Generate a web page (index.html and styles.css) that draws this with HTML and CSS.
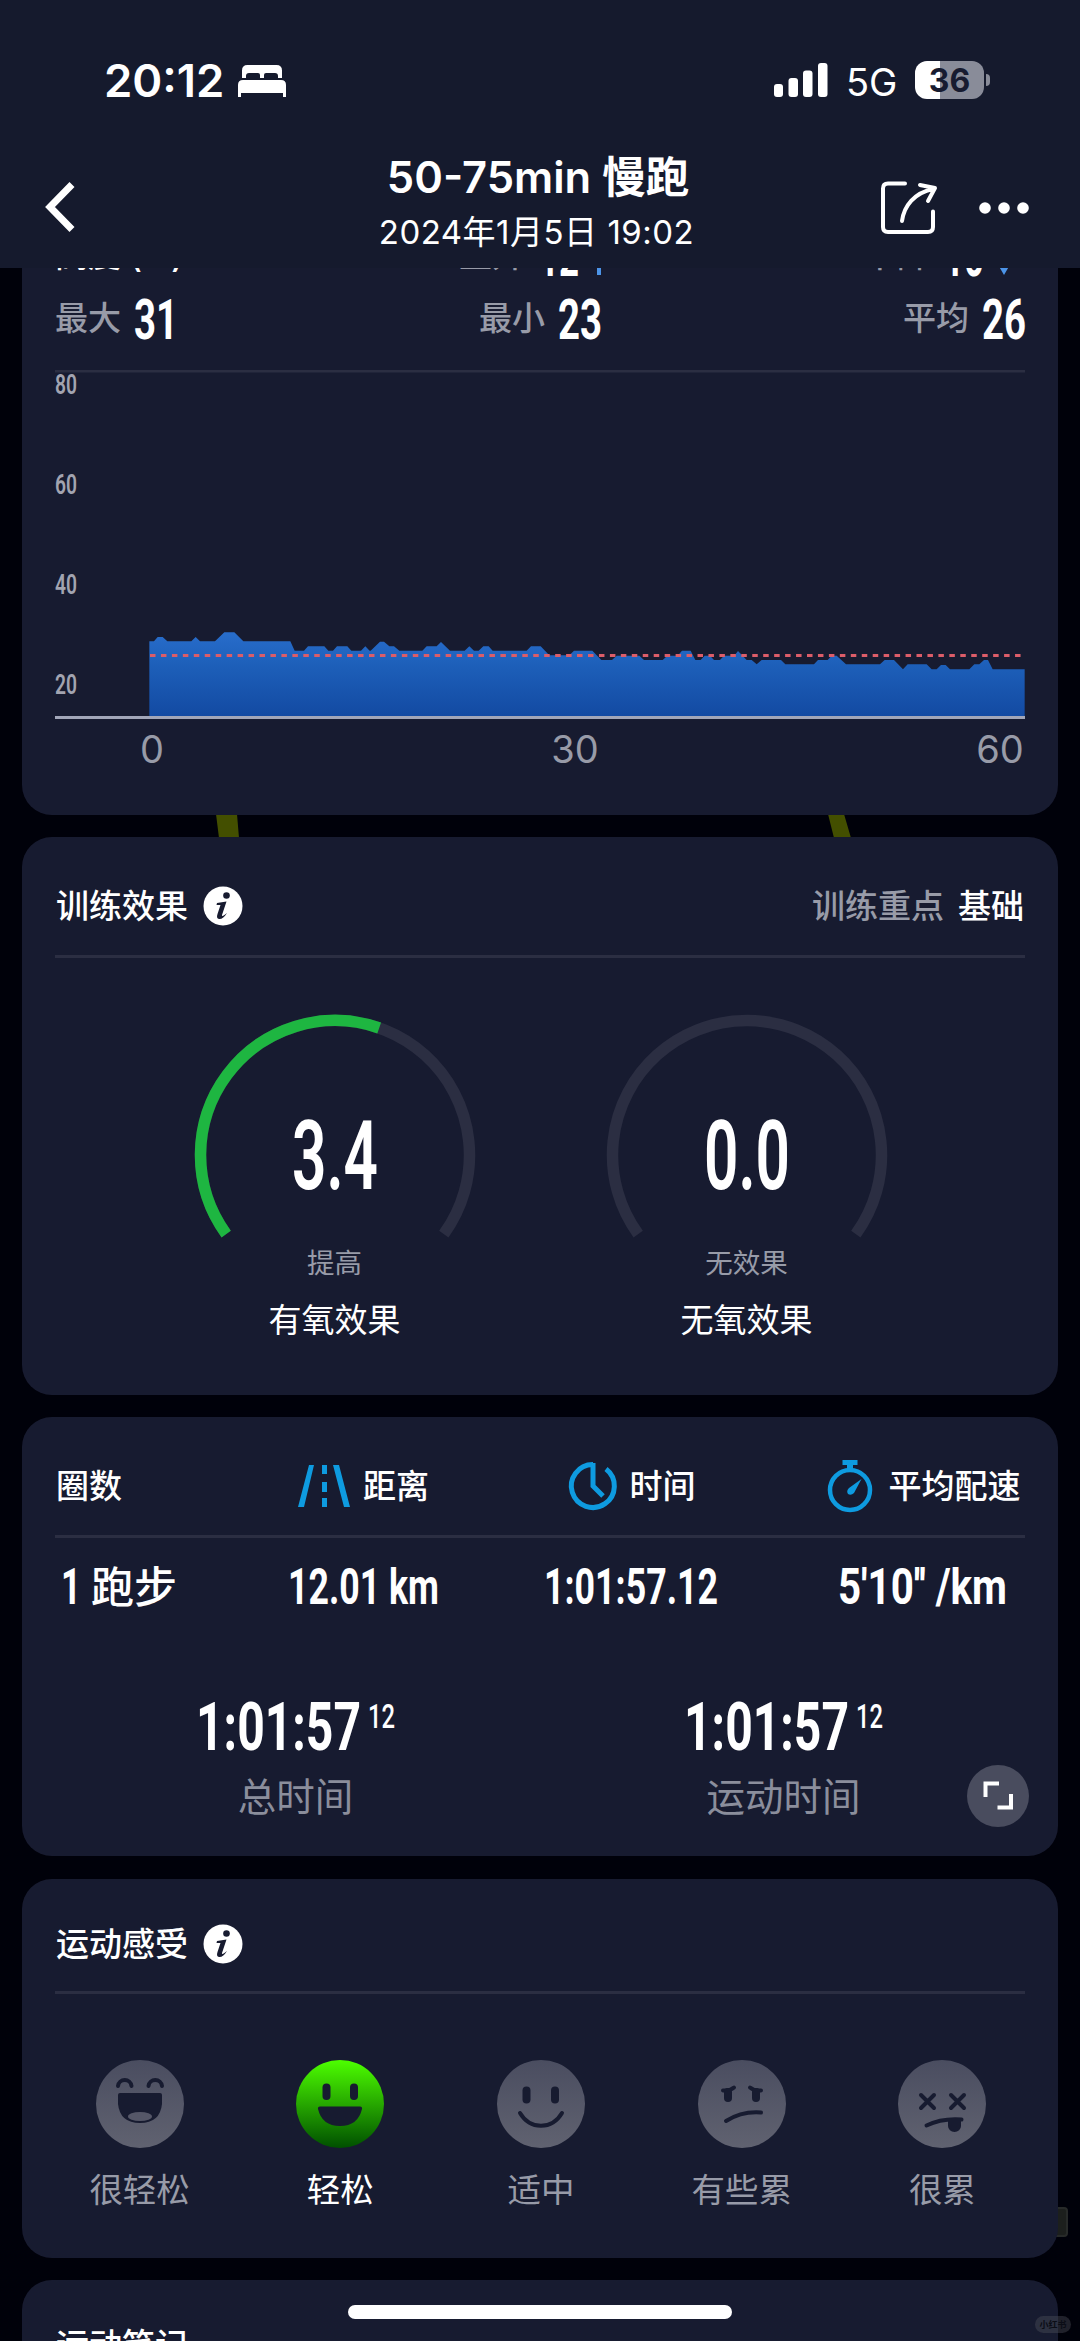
FILE: index.html
```html
<!DOCTYPE html>
<html lang="zh-CN">
<head>
<meta charset="utf-8">
<title>50-75min 慢跑</title>
<link rel="stylesheet" href="styles.css">
</head>
<body>
<div class="app">
  <header class="header">
    <div class="status">
      <div class="status-left">
        <span class="clock">20:12</span>
        <svg class="bed" width="48" height="34" viewBox="0 0 48 34" fill="#fff"><path d="M4 14V6.500Q4 1 9.500 1H38.500Q44 1 44 6.500V14H40V12Q40 9 37 9H28Q26 9 26 11V14H22V11Q22 9 20 9H11Q8 9 8 12V14Z"/><path d="M0 33V21Q0 16 5 16H43Q48 16 48 21V33H45V29H3V33Z"/></svg>
      </div>
      <div class="status-right">
        <svg width="54" height="34" viewBox="0 0 54 34" fill="#fff"><rect y="21" width="9" height="13" rx="3"/><rect x="14.500" y="15" width="9.500" height="19" rx="3"/><rect x="29" y="7.500" width="9.500" height="26.500" rx="3"/><rect x="44" width="9.500" height="34" rx="3"/></svg>
        <span class="network">5G</span>
        <div class="battery"><span>36</span></div>
        <i class="battery-nub"></i>
      </div>
    </div>
    <div class="nav">
      <svg class="back" width="32" height="52" viewBox="0 0 32 52" fill="none" stroke="#fff" stroke-width="7"><path d="M28 3.500L6 26L28 48.500"/></svg>
      <div class="heading">
        <h1>50-75min 慢跑</h1>
        <p>2024年1月5日 19:02</p>
      </div>
      <div class="actions">
        <svg width="58" height="56" viewBox="0 0 58 56" fill="none" stroke="#fff" stroke-width="4" stroke-linecap="round" stroke-linejoin="round"><path d="M25 3.500H8Q3 3.500 3 8.500V47Q3 52 8 52H48Q53 52 53 47V31.500"/><path d="M22 41C24 26 34 13 53 9M40 5L55 8L48 21"/></svg>
        <svg width="50" height="12" viewBox="0 0 50 12" fill="#fff"><circle cx="6" cy="6" r="5.800"/><circle cx="25" cy="6" r="5.800"/><circle cx="44" cy="6" r="5.800"/></svg>
      </div>
    </div>
  </header>

  <main class="content">
    <svg class="track" width="1080" height="24" viewBox="0 0 1080 24" fill="#434f00"><path d="M216 0H237L239 24H219ZM828 0H844L851 24H834Z"/></svg>
    <i class="map-tag"></i>

    <section class="card altitude">
      <div class="stat-row summary">
        <div class="stat title"><span>高度 (m)</span></div>
        <div class="stat"><span class="label">上升</span><svg class="num" width="38" height="40"><text x="-1" y="40" font-size="56" textLength="40" lengthAdjust="spacingAndGlyphs">12</text></svg><svg class="arrow" width="14" height="38" viewBox="0 0 14 38" fill="#4c94e8"><path d="M7 0L14 12H9V38H5V12H0Z"/></svg></div>
        <div class="stat"><span class="label">下降</span><svg class="num" width="38" height="40"><text x="-1" y="40" font-size="56" textLength="40" lengthAdjust="spacingAndGlyphs">10</text></svg><svg class="arrow" width="14" height="38" viewBox="0 0 14 38" fill="#4c94e8"><path d="M7 38L14 26H9V0H5V26H0Z"/></svg></div>
      </div>
      <div class="stat-row">
        <div class="stat"><span class="label">最大</span><svg class="num" width="41" height="39"><text x="-2" y="39" font-size="55" textLength="44" lengthAdjust="spacingAndGlyphs">31</text></svg></div>
        <div class="stat"><span class="label">最小</span><svg class="num" width="41" height="39"><text x="-2" y="39" font-size="55" textLength="44" lengthAdjust="spacingAndGlyphs">23</text></svg></div>
        <div class="stat"><span class="label">平均</span><svg class="num" width="41" height="39"><text x="-2" y="39" font-size="55" textLength="44" lengthAdjust="spacingAndGlyphs">26</text></svg></div>
      </div>
      <svg class="chart" width="970" height="400" viewBox="55 370 970 400">
        <defs><linearGradient id="area" x1="0" y1="97" x2="0" y2="348" gradientUnits="userSpaceOnUse"><stop offset="0" stop-color="#286dcb"/><stop offset=".4" stop-color="#1d5fb9"/><stop offset="1" stop-color="#134aa2"/></linearGradient></defs>
        <rect x="55" y="370" width="970" height="2.500" fill="#2b2e42"/>
        <g class="y-axis">
          <text x="55" y="394" textLength="22" lengthAdjust="spacingAndGlyphs">80</text>
          <text x="55" y="494" textLength="22" lengthAdjust="spacingAndGlyphs">60</text>
          <text x="55" y="594" textLength="22" lengthAdjust="spacingAndGlyphs">40</text>
          <text x="55" y="693.500" textLength="22" lengthAdjust="spacingAndGlyphs">20</text>
        </g>
        <g transform="translate(130 600) scale(.33333)">
          <polygon fill="url(#area)" points="58,350 58,124 72,124 83,111 98,111 112,124 184,124 197,111 210,124 255,124 283,97 313,97 340,124 481,124 494,152 522,152 534,139 583,139 595,152 609,152 621,139 652,139 664,152 693,152 706,139 719,152 722,152 750,125 762,125 778,139 792,139 808,152 877,152 890,139 920,139 933,126 960,152 1004,152 1018,139 1032,152 1046,152 1060,139 1076,139 1088,152 1190,152 1203,139 1232,139 1258,166 1318,166 1332,152 1387,152 1414,180 1446,180 1460,167 1528,167 1542,180 1598,180 1612,167 1643,167 1656,152 1682,152 1696,180 1712,180 1724,167 1740,167 1752,180 1770,180 1782,167 1813,167 1824,153 1850,180 1865,180 1880,193 1895,180 1953,180 1966,193 2052,193 2064,180 2093,180 2105,167 2120,167 2148,193 2250,193 2264,180 2292,180 2319,208 2333,193 2390,193 2405,208 2420,208 2433,195 2447,195 2460,208 2518,208 2533,193 2548,193 2562,180 2574,180 2588,208 2684,208 2684,350"/>
        </g>
        <path d="M150 655.500H1025" stroke="#dc5d69" stroke-width="3" stroke-dasharray="5.500 5.450"/>
        <rect x="55" y="716" width="970" height="3" fill="#a2a6b8"/>
        <g class="x-axis"><text x="152" y="763">0</text><text x="575" y="763">30</text><text x="1000" y="763">60</text></g>
      </svg>
    </section>

    <section class="card training">
      <div class="card-head">
        <h2>训练效果</h2>
        <svg class="info" width="40" height="40" viewBox="0 0 40 40"><circle cx="20" cy="20" r="19.500" fill="#fff"/><circle cx="23.500" cy="9.500" r="3.300" fill="#171b30"/><path d="M14 17L23.500 15.500L19 29Q18.500 31.500 24 27Q20 33.500 16 33Q13 32.500 14.500 28L17.500 19L13.500 19Z" fill="#171b30"/></svg>
        <div class="focus"><span>训练重点</span><b>基础</b></div>
      </div>
      <div class="gauges">
        <div class="gauge">
          <svg width="282" height="232" viewBox="-141 -141 282 232"><g fill="none" stroke-width="11.500"><path d="M-108.800 79.100A134.500 134.500 0 1 1 108.800 79.100" stroke="#2b2e42"/><path d="M-108.800 79.100A134.500 134.500 0 0 1 44.200 -127" stroke="#1eb641"/></g><text class="value" x="-43" y="33.500" textLength="86" lengthAdjust="spacingAndGlyphs">3.4</text></svg>
          <span class="level">提高</span><span class="name">有氧效果</span>
        </div>
        <div class="gauge">
          <svg width="282" height="232" viewBox="-141 -141 282 232"><path d="M-108.800 79.100A134.500 134.500 0 1 1 108.800 79.100" fill="none" stroke-width="11.500" stroke="#2b2e42"/><text class="value" x="-43" y="33.500" textLength="86" lengthAdjust="spacingAndGlyphs">0.0</text></svg>
          <span class="level">无效果</span><span class="name">无氧效果</span>
        </div>
      </div>
    </section>

    <section class="card laps">
      <div class="lap-grid lap-head">
        <div class="first">圈数</div>
        <div><svg width="52" height="42" viewBox="0 0 52 42" fill="#0e9be0"><path d="M11 0H16L6 42H0ZM35 0H41L52 42H46ZM24 0H29V9H24ZM24 17H29V27H24ZM24 33H29V42H24Z"/></svg>距离</div>
        <div><svg width="48" height="48" viewBox="0 0 48 48" fill="none" stroke="#0e9be0" stroke-width="5"><path d="M24 2.500A21.500 21.500 0 1 0 37 7"/><path d="M24 1V24L34 34"/></svg>时间</div>
        <div class="last"><svg width="46" height="54" viewBox="0 0 46 54"><circle cx="23" cy="31" r="20" fill="none" stroke="#0e9be0" stroke-width="4.500"/><path d="M15.500 1H30.500V6H26V12H20V6H15.500ZM34.500 20L27 34Q24 37 21 35Q19 32 22 29Z" fill="#0e9be0"/></svg>平均配速</div>
      </div>
      <div class="lap-grid lap-row">
        <div class="first"><svg class="num" width="17" height="36"><text x="-2" y="36" font-size="50" textLength="20" lengthAdjust="spacingAndGlyphs">1</text></svg><span>跑步</span></div>
        <div><svg class="num" width="146" height="36"><text x="-3" y="36" font-size="50" textLength="151" lengthAdjust="spacingAndGlyphs">12.01 km</text></svg></div>
        <div><svg class="num" width="170" height="36"><text x="-3" y="36" font-size="50" textLength="174" lengthAdjust="spacingAndGlyphs">1:01:57.12</text></svg></div>
        <div class="last"><svg class="num" width="168" height="36"><text x="-2" y="36" font-size="50" textLength="169" lengthAdjust="spacingAndGlyphs">5'10'' /km</text></svg></div>
      </div>
      <div class="totals">
        <div class="total"><svg class="num" width="196" height="48"><text x="-4" y="48" font-size="67" textLength="165" lengthAdjust="spacingAndGlyphs">1:01:57</text><text class="hundredths" x="168" y="26" font-size="34" textLength="27" lengthAdjust="spacingAndGlyphs">12</text></svg><span>总时间</span></div>
        <div class="total"><svg class="num" width="196" height="48"><text x="-4" y="48" font-size="67" textLength="165" lengthAdjust="spacingAndGlyphs">1:01:57</text><text class="hundredths" x="168" y="26" font-size="34" textLength="27" lengthAdjust="spacingAndGlyphs">12</text></svg><span>运动时间</span></div>
      </div>
      <div class="expand"><svg width="30" height="30" viewBox="0 0 30 30" fill="none" stroke="#fff" stroke-width="4"><path d="M2.500 16V2.500H16M28 13V26.500H14.500"/></svg></div>
    </section>

    <section class="card feeling">
      <div class="card-head">
        <h2>运动感受</h2>
        <svg class="info" width="40" height="40" viewBox="0 0 40 40"><circle cx="20" cy="20" r="19.500" fill="#fff"/><circle cx="23.500" cy="9.500" r="3.300" fill="#171b30"/><path d="M14 17L23.500 15.500L19 29Q18.500 31.500 24 27Q20 33.500 16 33Q13 32.500 14.500 28L17.500 19L13.500 19Z" fill="#171b30"/></svg>
      </div>
      <div class="moods">
        <svg width="0" height="0" class="defs"><defs><linearGradient id="grey" x1="0" y1="0" x2="0" y2="1"><stop offset="0" stop-color="#4a4d60"/><stop offset="1" stop-color="#606270"/></linearGradient><linearGradient id="green" x1="0" y1="0" x2="0" y2="1"><stop offset="0" stop-color="#4dff00"/><stop offset="1" stop-color="#005000"/></linearGradient></defs></svg>
        <div class="mood"><svg width="88" height="88" viewBox="-44 -44 88 88"><circle r="44" fill="url(#grey)"/><path d="M-22 -18A6.800 6.800 0 0 1 -8.500 -18M8.500 -18A6.800 6.800 0 0 1 22 -18" class="line"/><path class="ink" d="M-20 -11H20Q22 -11 22 -9V0Q20 19 0 19Q-20 19 -22 0V-9Q-22 -11 -20 -11Z"/><ellipse cy="12.500" rx="12" ry="4.500" fill="#555768"/></svg><span>很轻松</span></div>
        <div class="mood active"><svg width="88" height="88" viewBox="-44 -44 88 88"><circle r="44" fill="url(#green)"/><rect class="ink" x="-17.500" y="-20.500" width="8" height="16.500" rx="4"/><rect class="ink" x="10" y="-20.500" width="8" height="16.500" rx="4"/><path class="ink" d="M-20 2.500H20Q22.500 2.500 22 5Q18 22 0 22Q-18 22 -22 5Q-22.500 2.500 -20 2.500Z"/></svg><span>轻松</span></div>
        <div class="mood"><svg width="88" height="88" viewBox="-44 -44 88 88"><circle r="44" fill="url(#grey)"/><rect class="ink" x="-18.500" y="-17.500" width="8" height="17" rx="4"/><rect class="ink" x="10" y="-17.500" width="8" height="17" rx="4"/><path class="line" d="M-21 9C-11 26 11 26 21 9"/></svg><span>适中</span></div>
        <div class="mood"><svg width="88" height="88" viewBox="-44 -44 88 88"><circle r="44" fill="url(#grey)"/><path class="line" d="M-19 -13.500Q-12 -13 -8 -16.500M19 -13.500Q12 -13 8 -16.500M-16 17Q0 7 19 8.500"/><rect class="ink" x="-18" y="-16" width="8" height="14" rx="4"/><rect class="ink" x="10" y="-16" width="8" height="14" rx="4"/></svg><span>有些累</span></div>
        <div class="mood"><svg width="88" height="88" viewBox="-44 -44 88 88"><circle r="44" fill="url(#grey)"/><path class="line" d="M-21 -9L-8 4M-8 -9L-21 4M9 -9L22 4M22 -9L9 4M-15.500 21.500Q0 14 19.500 15.500"/><path class="ink" d="M6 16H19V22A6.500 6 0 0 1 6 22Z"/></svg><span>很累</span></div>
      </div>
    </section>

    <section class="card notes"><div class="card-head"><h2>运动笔记</h2></div></section>
  </main>
  <div class="home-bar"></div>
  <div class="watermark">小红书</div>
</div>
</body>
</html>
```
FILE: styles.css
```css
* { box-sizing: border-box; margin: 0; padding: 0; }
body { background: #00010a; }
svg { display: block; flex: none; overflow: visible; }

.app {
  position: relative;
  width: 1080px;
  height: 2341px;
  overflow: hidden;
  background: #00010a;
  color: #fff;
  font-family: Inter, "Noto Sans CJK SC", sans-serif;
}

.header {
  position: relative;
  z-index: 2;
  height: 268px;
  padding-top: 53px;
  background: #151a2d;
}
.status {
  display: flex;
  justify-content: space-between;
  height: 56px;
  padding: 0 90px 0 104px;
}
.status-left, .status-right { display: flex; align-items: center; }
.clock { font-size: 45.500px; font-weight: 600; line-height: 56px; width: 134px; }
.status-right { padding-bottom: 2px; }
.network { margin-left: 18px; width: 69px; font-size: 38px; line-height: 60px; padding-top: 4px; }
.battery {
  display: flex;
  align-items: center;
  justify-content: center;
  width: 69px;
  height: 38px;
  border-radius: 12px;
  background: linear-gradient(to right, #fff 25px, #898c99 25px);
  color: #171b30;
  font-size: 32px;
  font-weight: 700;
}
.battery-nub { width: 4px; height: 12px; margin-left: 2px; border-radius: 0 6px 6px 0; background: #898c99; }

.nav {
  display: grid;
  grid-template-columns: 200px 1fr 200px;
  align-items: start;
  padding: 41px 51px 0 44px;
}
.back { margin-top: 31px; }
.heading { text-align: center; }
.heading h1 { font-size: 43.500px; font-weight: 600; line-height: 54px; padding-left: 3px; }
.heading p { margin-top: 5px; font-size: 33px; font-weight: 400; letter-spacing: .5px; line-height: 46px; }
.actions { display: flex; align-items: center; justify-content: flex-end; gap: 41px; padding-top: 30px; }

.content { position: relative; height: 2073px; }
.track { position: absolute; left: 0; top: 546px; }
.map-tag {
  position: absolute;
  left: 1050px;
  top: 1939px;
  width: 18px;
  height: 30px;
  border: 2px solid #272a29;
  border-radius: 4px;
  background: #1c1f1d;
}
.card {
  position: relative;
  width: 1036px;
  margin: 0 auto 22px;
  padding: 0 33px;
  border-radius: 30px;
  background: #171b30;
}

.num { fill: #fff; font-family: Roboto, sans-serif; font-weight: 700; }

.altitude { top: -48px; height: 595px; margin-bottom: -26px; }
.stat-row { display: flex; justify-content: space-between; height: 54px; }
.stat { display: flex; align-items: center; font-size: 33px; font-weight: 500; line-height: 40px; }
.stat span { padding-bottom: 3px; }
.label { width: 81px; color: #989ba8; }
.summary { display: grid; grid-template-columns: 404px 1fr auto; height: 72px; padding-right: 14px; }
.summary .arrow { margin-left: 14px; }
.chart { margin-top: 24px; font-family: Inter, sans-serif; }
.y-axis { fill: #a2a4b0; font: 600 28px Roboto, sans-serif; }
.x-axis { fill: #989ba8; font-size: 38px; text-anchor: middle; }

.card-head {
  display: flex;
  align-items: center;
  padding: 0 1px;
  border-bottom: 3px solid #2b2e42;
}
.card-head h2 { font-size: 33px; font-weight: 500; line-height: 40px; }
.info { margin-left: 15px; }
.focus { display: flex; gap: 14px; margin-left: auto; font-size: 33px; line-height: 40px; }
.focus span { color: #989ba8; font-weight: 500; }
.focus b { font-weight: 500; }

.training { height: 558px; }
.training .card-head { height: 121px; padding-top: 19px; }
.gauges { display: grid; grid-template-columns: 412px 412px; justify-content: center; padding: 56px 0 0 1px; }
.gauge { display: flex; flex-direction: column; align-items: center; }
.gauge .value { fill: #fff; font: 600 96px Roboto, sans-serif; }
.level { margin-top: -1px; font-size: 27.500px; line-height: 36px; font-weight: 400; color: #989ba8; }
.name { margin-top: 19px; font-size: 33px; line-height: 40px; font-weight: 400; }

.laps { height: 439px; margin-bottom: 23px; }
.lap-grid { display: grid; grid-template-columns: 175px 267px 270px 258px; align-items: center; }
.lap-grid > div { display: flex; align-items: center; justify-content: center; gap: 13px; }
.lap-grid > .first { justify-content: flex-start; padding-left: 1px; }
.lap-grid > .last { padding-left: 55px; }
.lap-head { height: 121px; padding-top: 19px; border-bottom: 3px solid #2b2e42; font-size: 33px; font-weight: 500; line-height: 40px; }
.lap-head > .last { gap: 16px; white-space: nowrap; }
.lap-row { height: 96px; font-size: 43px; font-weight: 500; }
.lap-row > .first { padding-left: 8px; gap: 11px; line-height: 50px; }
.lap-row span { padding-top: 2px; }
.totals { display: grid; grid-template-columns: 488px 488px; margin-left: -1px; padding-top: 68px; }
.total { display: flex; flex-direction: column; align-items: center; }
.total span { margin: 23px 5px 0 0; font-size: 38.500px; font-weight: 400; line-height: 48px; color: #8b8e9c; white-space: nowrap; }
.num .hundredths { font-weight: 500; }
.expand {
  position: absolute;
  right: 29px;
  bottom: 29px;
  display: grid;
  place-items: center;
  width: 62px;
  height: 62px;
  border-radius: 50%;
  background: #494c5e;
}

.feeling { height: 379px; margin-bottom: 22px; }
.feeling .card-head { height: 115px; padding-top: 17px; }
.moods { display: grid; grid-template-columns: repeat(5, 200.700px); justify-content: center; padding: 66px 0 0 2px; }
.defs { position: absolute; }
.mood { display: flex; flex-direction: column; align-items: center; font-size: 33.500px; line-height: 44px; font-weight: 400; color: #989ba8; }
.mood span { margin-top: 20px; }
.mood.active { color: #fff; }
.mood .ink { fill: #171b30; }
.mood .line { fill: none; stroke: #171b30; stroke-width: 4; stroke-linecap: round; }

.notes { height: 100px; margin-bottom: 0; }
.notes .card-head { height: 115px; padding-top: 17px; }

.home-bar { position: absolute; z-index: 3; left: 348px; top: 2305px; width: 384px; height: 14px; border-radius: 7px; background: #fff; }
.watermark {
  position: absolute;
  z-index: 3;
  left: 1035px;
  top: 2316px;
  width: 36px;
  height: 17px;
  border-radius: 9px;
  background: rgba(80, 82, 92, .4);
  color: #0b0d16;
  font-size: 9px;
  font-weight: 700;
  line-height: 17px;
  text-align: center;
}
```
